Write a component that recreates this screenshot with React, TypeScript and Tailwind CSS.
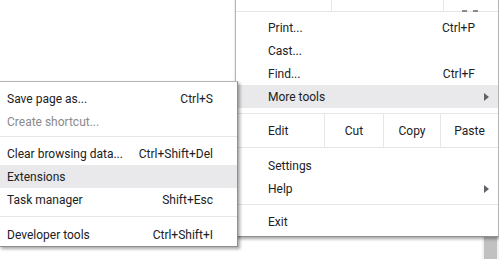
import React from "react";

const Arrow = () => (
  <svg width="5" height="8" viewBox="0 0 5 8" className="block">
    <path d="M0 0 L5 4 L0 8 Z" fill="#5f6368" />
  </svg>
);

function MainItem({ label, shortcut, arrow, highlight }: { label: string; shortcut?: string; arrow?: boolean; highlight?: boolean }) {
  return (
    <div className={`flex h-[23px] items-center pl-[32px] ${arrow ? "pr-[9px]" : "pr-[23px]"} ${highlight ? "bg-[#e9e9eb]" : ""}`}>
      <span className="flex-1">{label}</span>
      {shortcut && <span>{shortcut}</span>}
      {arrow && <Arrow />}
    </div>
  );
}

function SubItem({ label, shortcut, disabled, highlight }: { label: string; shortcut?: string; disabled?: boolean; highlight?: boolean }) {
  return (
    <div className={`flex h-[23px] items-center pl-[7px] pr-[24px] ${highlight ? "bg-[#e9e9eb]" : ""} ${disabled ? "text-[#8a8a8a]" : ""}`}>
      <span className="flex-1">{label}</span>
      {shortcut && <span>{shortcut}</span>}
    </div>
  );
}

export default function App() {
  return (
    <div className="relative w-[499px] h-[259px] bg-white overflow-hidden font-['Segoe_UI','Roboto','Noto_Sans',sans-serif] text-[12px] text-[#202124]">
      {/* scrollbar behind */}
      <div className="absolute right-0 top-0 h-[259px] w-[17px] bg-[#f1f1f1]">
        <div className="absolute left-[2px] top-[100px] bottom-0 w-[13px] bg-[#c1c1c1]" />
      </div>

      {/* main menu */}
      <div className="absolute left-[235px] top-[-23px] w-[264px] bg-white border border-[#b4b4b4] border-b-[#8f8f8f] shadow-[1px_2px_3px_rgba(0,0,0,0.35)]">
        <div className="flex h-[34px] border-b border-[#e6e6e6]">
          <div className="w-[95px]" />
          <div className="w-[112px] border-l border-[#e6e6e6]" />
          <div className="flex-1 border-l border-[#e6e6e6] relative">
            <div className="absolute left-[18px] bottom-[-1px] flex gap-[6px]">
              <div className="w-[5px] h-[2px] bg-[#8a8a8a]" />
              <div className="w-[5px] h-[2px] bg-[#8a8a8a]" />
            </div>
          </div>
        </div>
        <div className="pt-[4px] pb-[5px]">
          <MainItem label="Print..." shortcut="Ctrl+P" />
          <MainItem label="Cast..." />
          <MainItem label="Find..." shortcut="Ctrl+F" />
          <MainItem label="More tools" arrow highlight />
        </div>
        <div className="flex h-[35px] border-y border-[#e6e6e6]">
          <div className="w-[88px] pl-[32px] flex items-center">Edit</div>
          <div className="w-[59px] border-l border-[#e6e6e6] flex items-center justify-center">Cut</div>
          <div className="w-[57px] border-l border-[#e6e6e6] flex items-center justify-center">Copy</div>
          <div className="flex-1 border-l border-[#e6e6e6] flex items-center justify-center">Paste</div>
        </div>
        <div className="pt-[6px] pb-[4px] border-b border-[#e6e6e6]">
          <MainItem label="Settings" />
          <MainItem label="Help" arrow />
        </div>
        <div className="pt-[5px] pb-[3px]">
          <MainItem label="Exit" />
        </div>
      </div>

      {/* submenu */}
      <div className="absolute left-[-1px] top-[81px] w-[239px] bg-white border border-[#b4b4b4] border-b-[#8f8f8f] border-r-[#8f8f8f] shadow-[2px_2px_3px_rgba(0,0,0,0.35)]">
        <div className="pt-[5px] pb-[3px] border-b border-[#e6e6e6]">
          <SubItem label="Save page as..." shortcut="Ctrl+S" />
          <SubItem label="Create shortcut..." disabled />
        </div>
        <div className="pt-[5px] pb-[5px] border-b border-[#e6e6e6]">
          <SubItem label="Clear browsing data..." shortcut="Ctrl+Shift+Del" />
          <SubItem label="Extensions" highlight />
          <SubItem label="Task manager" shortcut="Shift+Esc" />
        </div>
        <div className="pt-[6px]">
          <SubItem label="Developer tools" shortcut="Ctrl+Shift+I" />
        </div>
      </div>
    </div>
  );
}
